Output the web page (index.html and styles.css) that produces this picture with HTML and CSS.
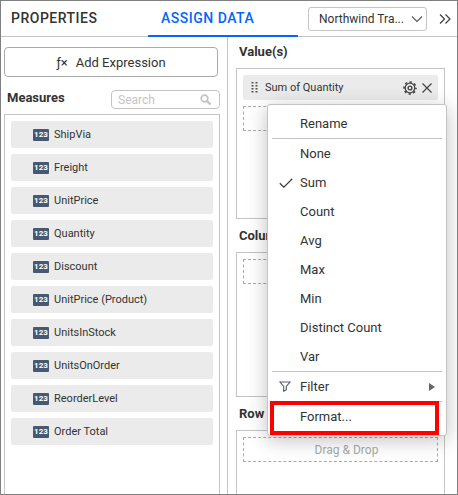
FILE: index.html
```html
<!DOCTYPE html>
<html lang="en">
<head>
<meta charset="utf-8">
<title>Assign Data</title>
<link rel="stylesheet" href="styles.css">
</head>
<body>
<div class="panel">
  <header class="topbar">
    <nav class="tabs">
      <button class="tab" type="button">PROPERTIES</button>
      <button class="tab tab-active" type="button">ASSIGN DATA</button>
    </nav>
    <div class="source">
      <select class="source-select" aria-label="Data source"><option>Northwind Tra...</option></select>
      <svg class="source-arrow" viewBox="0 0 12 8" width="12" height="8"><path d="M1 1.5 6 6.5 11 1.5" fill="none" stroke="#555" stroke-width="1.1"/></svg>
    </div>
    <button class="collapse" type="button" aria-label="Collapse">
      <svg viewBox="0 0 12 10" width="12" height="10"><path d="M1 .5 5.5 5 1 9.5M6.500 .5 11 5 6.500 9.500" fill="none" stroke="#444" stroke-width="1.3"/></svg>
    </button>
  </header>
  <main class="columns">
    <section class="fields">
      <button class="expression" type="button"><span class="fx">ƒ×</span>Add Expression</button>
      <div class="fields-head">
        <h2 class="heading">Measures</h2>
        <div class="search">
          <input class="search-input" type="text" placeholder="Search" aria-label="Search measures">
          <svg class="search-icon" viewBox="0 0 12 12" width="12" height="12"><circle cx="4.500" cy="4.500" r="3.300" fill="none" stroke="#c4c4c4" stroke-width="1.700"/><path d="M7 7 10.500 10.500" stroke="#c4c4c4" stroke-width="2.400"/></svg>
        </div>
      </div>
      <ul class="measures">
        <li class="measure"><span class="type">123</span>ShipVia</li>
        <li class="measure"><span class="type">123</span>Freight</li>
        <li class="measure"><span class="type">123</span>UnitPrice</li>
        <li class="measure"><span class="type">123</span>Quantity</li>
        <li class="measure"><span class="type">123</span>Discount</li>
        <li class="measure"><span class="type">123</span>UnitPrice (Product)</li>
        <li class="measure"><span class="type">123</span>UnitsInStock</li>
        <li class="measure"><span class="type">123</span>UnitsOnOrder</li>
        <li class="measure"><span class="type">123</span>ReorderLevel</li>
        <li class="measure"><span class="type">123</span>Order Total</li>
      </ul>
    </section>
    <section class="zones">
      <h2 class="heading zone-title">Value(s)</h2>
      <div class="zone">
        <div class="chip">
          <svg class="grip" viewBox="0 0 7 11" width="7" height="11"><path d="M1.500 0V11M5.500 0V11" stroke="#555" stroke-width="2" stroke-dasharray="1.500 1.500"/></svg>
          <span class="chip-name">Sum of Quantity</span>
          <button class="icon-button" type="button" aria-label="Settings">
            <svg viewBox="0 0 14 14" width="14" height="14"><circle cx="7" cy="7" r="6" fill="none" stroke="#444" stroke-width="1.600" stroke-dasharray="2.350 2.362" stroke-dashoffset="1.175"/><circle cx="7" cy="7" r="4.800" fill="none" stroke="#444" stroke-width="1.300"/><circle cx="7" cy="7" r="1.900" fill="none" stroke="#444" stroke-width="1.400"/></svg>
          </button>
          <button class="icon-button" type="button" aria-label="Remove">
            <svg viewBox="0 0 10 10" width="10" height="10"><path d="M.5.5 9.500 9.500M9.500.5.5 9.500" stroke="#444" stroke-width="1.200"/></svg>
          </button>
          <div class="menu" role="menu">
            <button class="item" type="button" role="menuitem"><span class="mark"></span>Rename</button>
            <hr class="rule">
            <button class="item" type="button" role="menuitem"><span class="mark"></span>None</button>
            <button class="item" type="button" role="menuitem"><span class="mark"><svg viewBox="0 0 14 10" width="14" height="10"><path d="M.8 5.200 4.800 9.200 13.300.8" fill="none" stroke="#444" stroke-width="1.300"/></svg></span>Sum</button>
            <button class="item" type="button" role="menuitem"><span class="mark"></span>Count</button>
            <button class="item" type="button" role="menuitem"><span class="mark"></span>Avg</button>
            <button class="item" type="button" role="menuitem"><span class="mark"></span>Max</button>
            <button class="item" type="button" role="menuitem"><span class="mark"></span>Min</button>
            <button class="item" type="button" role="menuitem"><span class="mark"></span>Distinct Count</button>
            <button class="item" type="button" role="menuitem"><span class="mark"></span>Var</button>
            <hr class="rule">
            <button class="item" type="button" role="menuitem"><span class="mark"><svg viewBox="0 0 12 11" width="12" height="11"><path d="M1 1H11L7.300 5.500V8.800L4.700 10.200V5.500Z" fill="none" stroke="#56606c" stroke-width="1.100"/></svg></span>Filter<svg class="more" viewBox="0 0 6 8" width="6" height="8"><path d="M0 0 6 4 0 8Z" fill="#5f6770"/></svg></button>
            <hr class="rule">
            <button class="item" type="button" role="menuitem"><span class="mark"></span>Format...</button>
            <span class="highlight"></span>
          </div>
        </div>
        <div class="drop"></div>
      </div>
      <h2 class="heading zone-title">Column(s)</h2>
      <div class="zone zone-short"><div class="drop"></div></div>
      <h2 class="heading zone-title">Row</h2>
      <div class="zone zone-last"><div class="drop">Drag &amp; Drop</div></div>
    </section>
  </main>
</div>
</body>
</html>
```

FILE: styles.css
```css
* { box-sizing: border-box; }
body {
  margin: 0;
  background: #fff;
  color: #333;
  font-family: Roboto, "Liberation Sans", sans-serif;
  font-size: 12px;
}
button, input, select { font: inherit; color: inherit; }
button { padding: 0; border: 0; background: none; }
svg { display: block; }
.panel {
  display: flex;
  flex-direction: column;
  height: 100vh;
  border: 1px solid #808080;
  overflow: hidden;
}
.topbar {
  display: flex;
  flex: none;
  align-items: center;
  height: 36px;
  border-bottom: 1px solid #c4c4c4;
}
.tabs { display: flex; align-self: stretch; margin-bottom: -1px; }
.tab {
  width: 147px;
  padding: 0 0 0 10px;
  border-bottom: 2px solid transparent;
  font-size: 14px;
  font-weight: 500;
  letter-spacing: 0.5px;
  text-align: left;
  white-space: nowrap;
}
.tab-active {
  width: 150px;
  padding-left: 13px;
  border-color: #0565ff;
  color: #0565ff;
}
.source { position: relative; flex: 1; margin-left: 10px; }
.source-select {
  display: block;
  width: 100%;
  height: 24px;
  padding: 0 16px 0 10px;
  border: 1px solid #c4c4c4;
  border-radius: 3px;
  background: #fff;
  appearance: none;
  font-size: 12px;
}
.source-arrow { position: absolute; top: 8px; right: 4px; }
.collapse { margin: 0 6px 0 12px; }
.columns { display: flex; flex: 1; min-height: 0; }
.fields {
  display: flex;
  flex-direction: column;
  width: 227px;
  padding: 10px 7px 0 3px;
  border-right: 1px solid #c4c4c4;
}
.expression {
  flex: none;
  height: 30px;
  margin-right: 2px;
  border: 1px solid #aaa;
  border-radius: 4px;
  font-size: 13px;
}
.fx { margin-right: 8px; }
.fields-head {
  display: flex;
  align-items: center;
  justify-content: space-between;
  margin: 13px 0 5px;
  padding-left: 3px;
}
.fields-head .heading { padding-bottom: 3px; }
.heading { margin: 0; font-size: 13px; font-weight: 700; line-height: 16px; }
.search {
  display: flex;
  align-items: center;
  width: 109px;
  height: 19px;
  padding: 0 7px 0 6px;
  border: 1px solid #c4c4c4;
  border-radius: 4px;
}
.search-input { flex: 1; min-width: 0; padding: 0; border: 0; outline: 0; }
.search-input::placeholder { color: #c4c4c4; }
.measures {
  display: flex;
  flex: 1;
  flex-direction: column;
  gap: 6px;
  margin: 0;
  padding: 6px;
  border: 1px solid #c4c4c4;
  border-bottom: 0;
  list-style: none;
}
.measure {
  display: flex;
  align-items: center;
  gap: 5px;
  height: 27px;
  padding-left: 22px;
  border-radius: 2px;
  background: #ebebeb;
  font-size: 11px;
}
.type {
  width: 16px;
  border-radius: 1px;
  background: #475872;
  color: #fff;
  font-size: 8px;
  font-weight: 700;
  line-height: 12px;
  text-align: center;
}
.zones {
  display: flex;
  flex: 1;
  flex-direction: column;
  min-width: 0;
  padding: 0 12px 0 8px;
}
.zone-title { padding: 7px 0 8px 3px; }
.zone {
  flex: none;
  height: 151px;
  margin-bottom: 2px;
  padding: 6px;
  border: 1px solid #c4c4c4;
}
.zone-short { height: 145px; }
.zone-last { flex: 1; margin-bottom: 0; border-bottom: 0; }
.chip {
  position: relative;
  display: flex;
  align-items: center;
  gap: 7px;
  height: 25px;
  margin-bottom: 6px;
  padding: 0 6px 0 8px;
  border-radius: 2px;
  background: #ebebeb;
  font-size: 11px;
}
.chip-name { flex: 1; }
.icon-button + .icon-button { margin-left: -2px; }
.drop {
  height: 25px;
  padding-left: 12px;
  border: 1px dashed #aaa;
  color: #aaa;
  line-height: 25px;
  text-align: center;
}
.menu {
  position: absolute;
  z-index: 1;
  top: 29px;
  right: -9px;
  width: 180px;
  padding: 4px;
  border: 1px solid #c4c4c4;
  border-radius: 3px;
  background: #fff;
  box-shadow: 0 4px 20px rgba(0, 0, 0, 0.25);
}
.item {
  display: flex;
  align-items: center;
  width: 100%;
  height: 29px;
  padding: 0 7px;
  font-size: 13px;
}
.mark { width: 21px; }
.more { margin-left: auto; }
.rule { margin: 0; border: 0; border-top: 1px solid #c4c4c4; }
.highlight {
  position: absolute;
  right: 7px;
  bottom: 0;
  left: 2px;
  height: 34px;
  border: 4px solid #f00;
}
```
